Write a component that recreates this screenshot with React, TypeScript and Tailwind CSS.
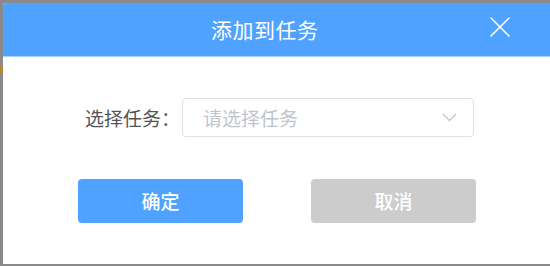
import React from "react";

const font = { fontFamily: '"Noto Sans CJK SC", "Noto Sans", sans-serif' };

export default function App() {
  return (
    <div
      className="relative w-[550px] h-[266px] overflow-hidden bg-[#8a8a8a] pt-[3px] pl-[3px]"
      style={font}
    >
      {/* page content peeking behind the mask */}
      <div className="absolute left-0 top-[65px] w-[3px] h-[8px] bg-[#b8883a]" />

      <div className="relative w-[560px] h-[261px] bg-white rounded-tl-[4px] overflow-hidden flex flex-col">
        <div className="h-[53px] shrink-0 bg-[#4fa2ff] flex items-center">
          <h1 className="ml-[208px] text-[21px] leading-none text-white tracking-[0.5px]">
            添加到任务
          </h1>
          <button className="ml-[171px] mt-[-6px] w-[20px] h-[20px] flex items-center justify-center">
            <svg width="20" height="20" viewBox="0 0 20 20" fill="none">
              <path
                d="M1 1L19 19M19 1L1 19"
                stroke="#ffffff"
                strokeWidth="1.6"
                strokeLinecap="round"
              />
            </svg>
          </button>
        </div>
        <div className="h-px shrink-0 bg-[#a9d0ff]" />

        <div className="flex items-center pl-[82px] mt-[41px]">
          <span className="w-[97px] text-[19px] text-[#555555] leading-none whitespace-nowrap">
            选择任务：
          </span>
          <div className="w-[292px] h-[39px] border border-[#dcdfe6] rounded-[4px] flex items-center justify-between pl-[20px] pr-[16px]">
            <span className="text-[19px] text-[#c0c4cc] leading-none">请选择任务</span>
            <svg width="15" height="9" viewBox="0 0 15 9" fill="none">
              <path d="M1 1L7.5 7.5L14 1" stroke="#c0c4cc" strokeWidth="1.3" />
            </svg>
          </div>
        </div>

        <div className="flex items-center pl-[75px] mt-[42px] gap-[68px]">
          <button className="w-[165px] h-[44px] rounded-[4px] bg-[#4fa2ff] text-white text-[19px] font-medium">
            确定
          </button>
          <button className="w-[165px] h-[44px] rounded-[4px] bg-[#cccccc] text-white text-[19px] font-medium">
            取消
          </button>
        </div>
      </div>
    </div>
  );
}
